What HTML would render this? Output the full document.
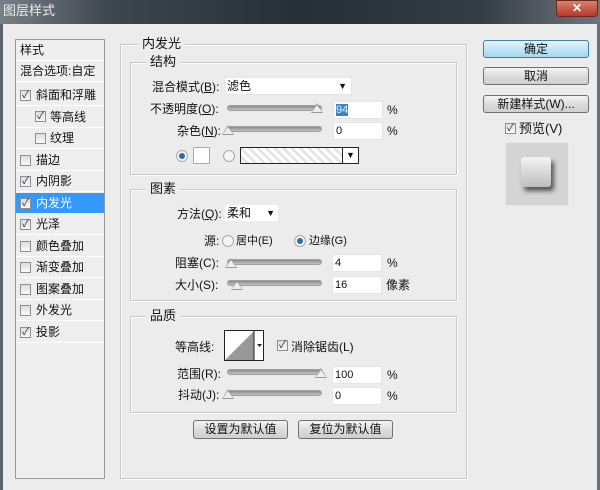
<!DOCTYPE html>
<html><head><meta charset="utf-8"><style>
*{margin:0;padding:0;box-sizing:border-box}
body{width:600px;height:490px;overflow:hidden;background:#ececec;font-family:"Liberation Sans","Noto Sans CJK SC",sans-serif;font-size:12px;color:#111;position:relative}
.a{position:absolute;white-space:nowrap;line-height:14px}
.fs{position:absolute;border:1px solid #c8c8c8;box-shadow:1px 1px 0 #fff inset,1px 1px 0 #fff}
.lg{position:absolute;background:#ececec;padding:0 4px;line-height:14px;font-size:13px}
.in{position:absolute;background:#fff;border:1px solid #e4e4e4;height:18px;line-height:16px;padding-left:2px;font-size:11px}
.sl{position:absolute;height:6px;border-radius:3px;background:linear-gradient(#8a8a8a,#c4c4c4);border:1px solid #a0a0a0}
.th{position:absolute;width:0;height:0;border-left:6px solid transparent;border-right:6px solid transparent;border-bottom:10px solid #999}
.th:after{content:"";position:absolute;left:-5px;top:2px;border-left:5px solid transparent;border-right:5px solid transparent;border-bottom:7px solid #eee}
.cb{position:absolute;width:11px;height:11px;border:1px solid #8e8f8f;background:linear-gradient(#ddd,#fafafa);font-size:10px;line-height:9px;text-align:center;color:#224}
.rd{position:absolute;width:12px;height:12px;border-radius:50%;border:1px solid #aaa;background:#f4f4f4}
.rd.on:after{content:"";position:absolute;left:2px;top:2px;width:6px;height:6px;border-radius:50%;background:#2a6ea8}
.bt{position:absolute;border:1px solid #707070;border-radius:3px;background:linear-gradient(#f4f4f4,#dcdcdc 50%,#cfcfcf);text-align:center;font-size:12px;line-height:16px}
.li{position:absolute;left:16px;width:88px;height:21px;border-bottom:1px solid #fff;font-size:12px;line-height:21px}
</style></head><body>
<div class="a" style="left:0;top:0;width:600px;height:24px;background:linear-gradient(90deg,#7a7f86,#3e4650 18%,#262e38 50%,#343c46 80%,#70767e)"></div>
<div class="a" style="left:3px;top:4px;color:#eee;font-size:13px">图层样式</div>
<div class="a" style="left:556px;top:0;width:42px;height:17px;background:linear-gradient(#d88070,#b83a28);border:1px solid #6a2a20;border-radius:0 0 4px 4px;color:#fff;text-align:center;font-weight:bold;font-size:12px;line-height:15px">✕</div>
<div class="a" style="left:0;top:24px;width:3px;height:466px;background:#5a626c"></div>
<div class="a" style="left:597px;top:24px;width:3px;height:466px;background:#6a7078"></div>

<div class="a" style="left:15px;top:39px;width:90px;height:440px;border:1px solid #9a9a9a;background:#eeeeee"></div>
<div class="li" style="top:40px;padding-left:4px">样式</div>
<div class="li" style="top:61px;padding-left:4px">混合选项:自定</div>
<div class="li" style="top:85px;padding-left:20px">斜面和浮雕</div><div class="cb" style="left:20px;top:90px">✓</div>
<div class="li" style="top:107px;padding-left:34px">等高线</div><div class="cb" style="left:35px;top:111px">✓</div>
<div class="li" style="top:128px;padding-left:34px">纹理</div><div class="cb" style="left:35px;top:133px"></div>
<div class="li" style="top:150px;padding-left:20px">描边</div><div class="cb" style="left:20px;top:155px"></div>
<div class="li" style="top:171px;padding-left:20px">内阴影</div><div class="cb" style="left:20px;top:176px">✓</div>
<div class="li" style="top:193px;padding-left:20px;background:#3399ff;color:#fff">内发光</div><div class="cb" style="left:20px;top:198px">✓</div>
<div class="li" style="top:214px;padding-left:20px">光泽</div><div class="cb" style="left:20px;top:219px">✓</div>
<div class="li" style="top:236px;padding-left:20px">颜色叠加</div><div class="cb" style="left:20px;top:241px"></div>
<div class="li" style="top:257px;padding-left:20px">渐变叠加</div><div class="cb" style="left:20px;top:262px"></div>
<div class="li" style="top:279px;padding-left:20px">图案叠加</div><div class="cb" style="left:20px;top:284px"></div>
<div class="li" style="top:300px;padding-left:20px">外发光</div><div class="cb" style="left:20px;top:305px"></div>
<div class="li" style="top:322px;padding-left:20px">投影</div><div class="cb" style="left:20px;top:327px">✓</div>

<div class="fs" style="left:120px;top:44px;width:347px;height:435px"></div>
<div class="lg" style="left:138px;top:37px">内发光</div>
<div class="fs" style="left:130px;top:62px;width:327px;height:113px"></div>
<div class="lg" style="left:146px;top:55px">结构</div>
<div class="a" style="left:152px;top:80px">混合模式(<u>B</u>):</div>
<div class="in" style="left:224px;top:77px;width:128px;font-size:12px">滤色<span style="position:absolute;right:4px;top:0;font-size:9px">▼</span></div>
<div class="a" style="left:150px;top:102px">不透明度(<u>O</u>):</div>
<div class="sl" style="left:227px;top:105px;width:95px"></div><div class="th" style="left:311px;top:103px"></div>
<div class="in" style="left:333px;top:101px;width:50px"><span style="background:#3a7fd0;color:#cfe">94</span></div><div class="a" style="left:387px;top:103px">%</div>
<div class="a" style="left:177px;top:124px">杂色(<u>N</u>):</div>
<div class="sl" style="left:227px;top:126px;width:95px"></div><div class="th" style="left:222px;top:125px"></div>
<div class="in" style="left:333px;top:122px;width:50px">0</div><div class="a" style="left:387px;top:124px">%</div>
<div class="rd on" style="left:176px;top:150px"></div>
<div class="a" style="left:193px;top:147px;width:17px;height:17px;background:#fff;border:1px solid #aaa"></div>
<div class="rd" style="left:223px;top:150px"></div>
<div class="a" style="left:240px;top:147px;width:119px;height:17px;border:1px solid #222;background:repeating-linear-gradient(45deg,#fff 0 3px,#e4e4e4 3px 6px)"><span style="position:absolute;right:0;top:0;width:16px;height:15px;border-left:1px solid #222;background:#fff;font-size:9px;text-align:center;line-height:15px">▼</span></div>

<div class="fs" style="left:130px;top:189px;width:327px;height:112px"></div>
<div class="lg" style="left:146px;top:182px">图素</div>
<div class="a" style="left:177px;top:207px">方法(<u>Q</u>):</div>
<div class="in" style="left:224px;top:204px;width:55px;font-size:12px;border-color:#eee">柔和<span style="position:absolute;right:3px;top:0;font-size:9px">▼</span></div>
<div class="a" style="left:204px;top:234px">源:</div>
<div class="rd" style="left:222px;top:235px"></div><div class="a" style="left:236px;top:234px;font-size:11px">居中(E)</div>
<div class="rd on" style="left:294px;top:235px"></div><div class="a" style="left:309px;top:234px;font-size:11px">边缘(G)</div>
<div class="a" style="left:175px;top:256px">阻塞(C):</div>
<div class="sl" style="left:227px;top:259px;width:95px"></div><div class="th" style="left:225px;top:258px"></div>
<div class="in" style="left:332px;top:254px;width:50px">4</div><div class="a" style="left:387px;top:256px">%</div>
<div class="a" style="left:175px;top:278px">大小(S):</div>
<div class="sl" style="left:227px;top:280px;width:95px"></div><div class="th" style="left:231px;top:280px"></div>
<div class="in" style="left:332px;top:276px;width:50px">16</div><div class="a" style="left:386px;top:278px">像素</div>

<div class="fs" style="left:130px;top:316px;width:327px;height:97px"></div>
<div class="lg" style="left:146px;top:309px">品质</div>
<div class="a" style="left:175px;top:340px">等高线:</div>
<div class="a" style="left:224px;top:330px;width:40px;height:31px;border:1px solid #222;background:#fff;overflow:hidden">
<svg width="40" height="31" style="position:absolute;left:0;top:0"><polygon points="0,29 29,0 29,29" fill="#999"/><line x1="29" y1="0" x2="29" y2="31" stroke="#222"/><polygon points="32,13 37,13 34.5,16" fill="#222"/></svg></div>
<div class="cb" style="left:277px;top:340px">✓</div><div class="a" style="left:291px;top:340px">消除锯齿(L)</div>
<div class="a" style="left:177px;top:367px">范围(R):</div>
<div class="sl" style="left:227px;top:369px;width:95px"></div><div class="th" style="left:315px;top:368px"></div>
<div class="in" style="left:332px;top:366px;width:50px">100</div><div class="a" style="left:387px;top:368px">%</div>
<div class="a" style="left:178px;top:388px">抖动(J):</div>
<div class="sl" style="left:227px;top:390px;width:95px"></div><div class="th" style="left:222px;top:389px"></div>
<div class="in" style="left:332px;top:387px;width:50px">0</div><div class="a" style="left:387px;top:389px">%</div>

<div class="bt" style="left:193px;top:420px;width:95px;height:19px">设置为默认值</div>
<div class="bt" style="left:298px;top:420px;width:95px;height:19px">复位为默认值</div>

<div class="bt" style="left:483px;top:40px;width:106px;height:18px;border-color:#3c7fb1;background:linear-gradient(#e6f6fd,#bfe6f6 50%,#a6d8ee)">确定</div>
<div class="bt" style="left:483px;top:67px;width:106px;height:18px">取消</div>
<div class="bt" style="left:483px;top:95px;width:106px;height:18px">新建样式(W)...</div>
<div class="cb" style="left:505px;top:123px">✓</div><div class="a" style="left:519px;top:122px;font-size:13px">预览(V)</div>
<div class="a" style="left:505px;top:142px;width:64px;height:64px;background:#d4d4d4;border:1px solid #e8e8e8"></div>
<div class="a" style="left:521px;top:157px;width:30px;height:30px;background:linear-gradient(#f4f4f4,#bdbdbd);border-radius:3px;box-shadow:3px 4px 5px #555"></div>
</body></html>
